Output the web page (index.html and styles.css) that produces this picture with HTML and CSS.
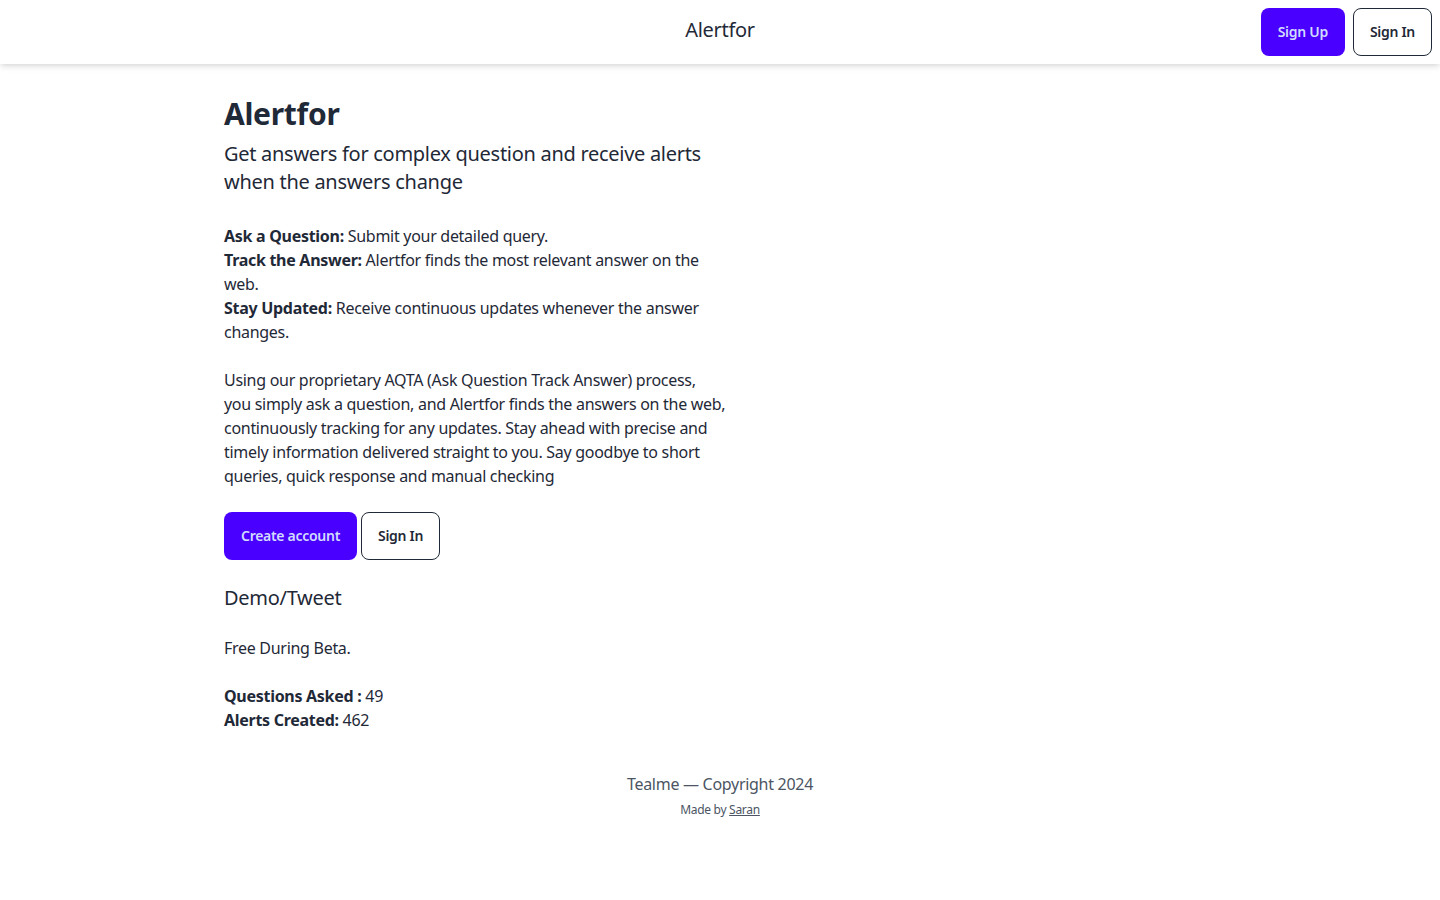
FILE: index.html
```html
<!DOCTYPE html>
<html lang="en">
<head>
    <meta charset="UTF-8">
    <meta name="viewport" content="width=device-width, initial-scale=1.0">
    <title>Alertfor</title>
    <link rel="stylesheet" href="styles.css">
</head>
<body>
    <header class="navbar">
        <div class="navbar-start"></div>
        <div class="navbar-center">Alertfor</div>
        <div class="navbar-end">
            <a class="btn btn-primary" href="#">Sign Up</a>
            <a class="btn btn-outline" href="#">Sign In</a>
        </div>
    </header>

    <main class="hero">
        <div class="hero-content">
            <h1 class="title">Alertfor</h1>
            <p class="tagline">Get answers for complex question and receive alerts when the answers change</p>

            <p class="steps">
                <b>Ask a Question:</b> Submit your detailed query.<br>
                <b>Track the Answer:</b> Alertfor finds the most relevant answer on the web.<br>
                <b>Stay Updated:</b> Receive continuous updates whenever the answer changes.
            </p>

            <p class="about">Using our proprietary AQTA (Ask Question Track Answer) process, you simply ask a question, and Alertfor finds the answers on the web, continuously tracking for any updates. Stay ahead with precise and timely information delivered straight to you. Say goodbye to short queries, quick response and manual checking</p>

            <div class="actions">
                <a class="btn btn-primary" href="#">Create account</a>
                <a class="btn btn-outline" href="#">Sign In</a>
            </div>

            <h2 class="demo">Demo/Tweet</h2>

            <p class="beta">Free During Beta.</p>

            <p class="stats">
                <b>Questions Asked :</b> 49<br>
                <b>Alerts Created:</b> 462
            </p>
        </div>
    </main>

    <footer class="footer">
        <p class="copyright">Tealme — Copyright 2024</p>
        <p class="made-by">Made by <a href="#">Saran</a></p>
    </footer>
</body>
</html>
```

FILE: styles.css
```css
body {
    font-family: 'Noto Sans', sans-serif;
    margin: 0;
    padding: 0;
    background-color: #ffffff;
    color: #1f2937;
    font-size: 16px;
    line-height: 24px;
    letter-spacing: -0.018em;
}
.navbar {
    display: flex;
    align-items: center;
    height: 64px;
    padding: 0 8px;
    box-sizing: border-box;
    background-color: white;
    box-shadow: 0 4px 6px -1px rgba(0, 0, 0, 0.1), 0 2px 4px -1px rgba(0, 0, 0, 0.06);
}
.navbar-start,
.navbar-end {
    flex: 1;
    display: flex;
}
.navbar-end {
    justify-content: flex-end;
    gap: 8px;
}
.navbar-center {
    font-size: 20px;
    line-height: 28px;
    margin-top: -4px;
}
.btn {
    display: inline-flex;
    align-items: center;
    justify-content: center;
    height: 48px;
    padding: 0 16px;
    box-sizing: border-box;
    border-radius: 8px;
    border: 1px solid transparent;
    font-size: 14px;
    font-weight: 600;
    text-decoration: none;
}
.btn-primary {
    background-color: #4a00ff;
    color: #d1dbff;
}
.btn-outline {
    border-color: #1f2937;
    color: #1f2937;
    background-color: white;
}
.hero {
    display: flex;
    justify-content: center;
    padding-top: 32px;
}
.hero-content {
    width: 992px;
}
.title {
    margin: 0;
    font-size: 30px;
    line-height: 36px;
    font-weight: 700;
}
.tagline {
    width: 500px;
    margin: 8px 0 0;
    font-size: 20px;
    line-height: 28px;
}
.steps,
.about {
    width: 502px;
    margin: 28px 0 0;
}
.about {
    margin-top: 24px;
}
.actions {
    display: flex;
    gap: 4px;
    margin-top: 24px;
}
.demo {
    margin: 24px 0 0;
    font-size: 20px;
    line-height: 28px;
    font-weight: 400;
}
.beta {
    margin: 24px 0 0;
}
.stats {
    margin: 24px 0 0;
}
.footer {
    text-align: center;
    padding-top: 40px;
    color: #4b5563;
}
.copyright {
    margin: 0;
}
.made-by {
    margin: 6px 0 0;
    font-size: 12px;
    line-height: 16px;
}
.made-by a {
    color: #4b5563;
}
```
